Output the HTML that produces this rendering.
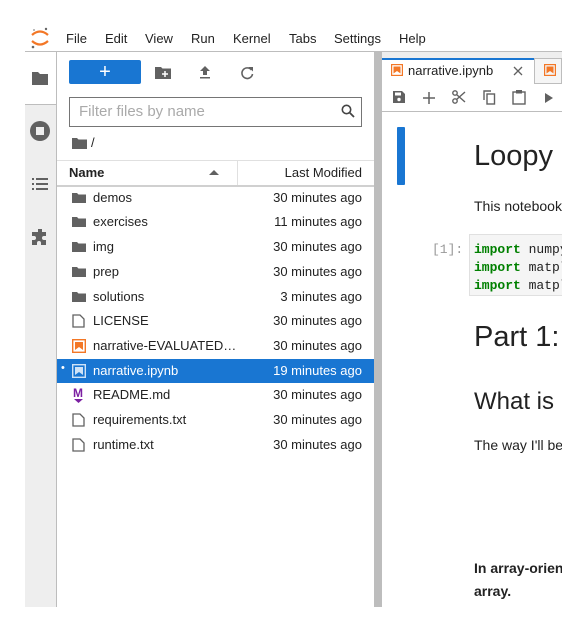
<!DOCTYPE html>
<html><head><style>
body{margin:0;width:587px;height:632px;background:#fff;position:relative;overflow:hidden;font-family:"Liberation Sans",sans-serif;color:#222}
.a{position:absolute}
.menu span{position:absolute;top:31px;font-size:13px;color:#222}
.row{position:absolute;left:57px;width:317px;height:24px;font-size:13px;color:#222}
.row .n{position:absolute;left:36px;top:4px}
.row .t{position:absolute;right:12px;top:4px}
.row .i{position:absolute;left:15px;top:6px}
code{font-family:"Liberation Mono",monospace}
</style></head><body>
<svg class="a" style="left:30px;top:26px" width="20" height="24" viewBox="0 0 20 24"><path d="M2 9 Q10 2 18 9" stroke="#f37726" stroke-width="2.2" fill="none"/><path d="M2 15 Q10 22 18 15" stroke="#f37726" stroke-width="2.2" fill="none"/><circle cx="16" cy="3" r="1.2" fill="#666"/><circle cx="3" cy="21" r="1.3" fill="#666"/><circle cx="4" cy="4" r="0.9" fill="#888"/></svg>
<div class="menu"><span style="left:66px">File</span><span style="left:105px">Edit</span><span style="left:145px">View</span><span style="left:191px">Run</span><span style="left:233px">Kernel</span><span style="left:289px">Tabs</span><span style="left:334px">Settings</span><span style="left:399px">Help</span></div>
<div class="a" style="left:25px;top:51px;width:537px;height:1px;background:#bdbdbd"></div>
<div class="a" style="left:25px;top:104px;width:31px;height:503px;background:#eee"></div>
<div class="a" style="left:56px;top:52px;width:1px;height:555px;background:#bdbdbd"></div>
<div class="a" style="left:25px;top:104px;width:31px;height:1px;background:#bdbdbd"></div>
<svg class="a" style="left:31px;top:70px" width="18" height="16"><path d="M1 2h6l2 2h8v11H1z" fill="#616161"/></svg>
<svg class="a" style="left:30px;top:121px" width="20" height="20"><circle cx="10" cy="10" r="10" fill="#616161"/><rect x="6" y="6" width="8" height="8" fill="#eee"/></svg>
<svg class="a" style="left:31px;top:177px" width="18" height="14" fill="#616161"><rect x="1" y="1" width="2" height="2"/><rect x="5" y="1" width="12" height="2"/><rect x="1" y="6" width="2" height="2"/><rect x="5" y="6" width="12" height="2"/><rect x="1" y="11" width="2" height="2"/><rect x="5" y="11" width="12" height="2"/></svg>
<svg class="a" style="left:31px;top:228px" width="18" height="18"><path d="M7 1h4v3h4v4h-2a2 2 0 0 0 0 4h2v5H10v-2a2 2 0 0 0-4 0v2H1v-5h2a2 2 0 0 0 0-4H1V4h6z" fill="#616161"/></svg>
<div class="a" style="left:69px;top:60px;width:72px;height:24px;background:#1976d2;border-radius:2px;color:#fff;text-align:center;font-size:20px;line-height:24px">+</div>
<svg class="a" style="left:155px;top:66px" width="16" height="13"><path d="M0 1h6l1.5 1.5H16V13H0z" fill="#616161"/><path d="M10 5v6M7 8h6" stroke="#fff" stroke-width="1.5"/></svg>
<svg class="a" style="left:199px;top:66px" width="12" height="13"><path d="M6 0L11 5H8v4H4V5H1z" fill="#616161"/><rect x="1" y="11" width="10" height="1.5" fill="#616161"/></svg>
<svg class="a" style="left:240px;top:66px" width="14" height="14"><path d="M11.5 4A5.3 5.3 0 1 0 12.5 8" stroke="#616161" stroke-width="1.6" fill="none"/><path d="M8.5 1L13 1L13 5.5z" fill="#616161"/></svg>
<div class="a" style="left:69px;top:97px;width:291px;height:28px;border:1px solid #757575;font-size:15px;color:#aaa;line-height:28px;text-indent:9px">Filter files by name</div>
<svg class="a" style="left:341px;top:104px" width="14" height="14"><circle cx="5.5" cy="5.5" r="4.2" stroke="#444" stroke-width="1.6" fill="none"/><path d="M8.5 8.5L13 13" stroke="#444" stroke-width="1.8"/></svg>
<svg class="a" style="left:72px;top:137px" width="15" height="12"><path d="M0 1h5l1.5 1.5H15V12H0z" fill="#616161"/></svg>
<div class="a" style="left:91px;top:135px;font-size:13px">/</div>
<div class="a" style="left:57px;top:160px;width:317px;height:1px;background:#e0e0e0"></div>
<div class="a" style="left:237px;top:161px;width:1px;height:24px;background:#e0e0e0"></div>
<div class="a" style="left:57px;top:185px;width:317px;height:2px;background:#d0d0d0"></div>
<div class="a" style="left:69px;top:165px;font-size:13px;font-weight:bold">Name</div>
<svg class="a" style="left:209px;top:170px" width="10" height="6"><path d="M0 5L5 0L10 5z" fill="#616161"/></svg>
<div class="a" style="right:225px;top:165px;font-size:13px">Last Modified</div>
<div class="row" style="top:186px"><svg class="i" width="14" height="12"><path d="M0 1h5l1.5 1.5H14V11H0z" fill="#616161"/></svg><span class="n">demos</span><span class="t">30 minutes ago</span></div>
<div class="row" style="top:210px"><svg class="i" width="14" height="12"><path d="M0 1h5l1.5 1.5H14V11H0z" fill="#616161"/></svg><span class="n">exercises</span><span class="t">11 minutes ago</span></div>
<div class="row" style="top:235px"><svg class="i" width="14" height="12"><path d="M0 1h5l1.5 1.5H14V11H0z" fill="#616161"/></svg><span class="n">img</span><span class="t">30 minutes ago</span></div>
<div class="row" style="top:260px"><svg class="i" width="14" height="12"><path d="M0 1h5l1.5 1.5H14V11H0z" fill="#616161"/></svg><span class="n">prep</span><span class="t">30 minutes ago</span></div>
<div class="row" style="top:285px"><svg class="i" width="14" height="12"><path d="M0 1h5l1.5 1.5H14V11H0z" fill="#616161"/></svg><span class="n">solutions</span><span class="t">3 minutes ago</span></div>
<div class="row" style="top:309px"><svg class="i" width="13" height="14" style="top:5px"><path d="M1 1h7l4 4v8H1z" stroke="#616161" stroke-width="1.3" fill="none"/></svg><span class="n">LICENSE</span><span class="t">30 minutes ago</span></div>
<div class="row" style="top:334px"><svg class="i" width="14" height="14" style="top:5px"><rect x="0.7" y="0.7" width="12.6" height="12.6" fill="none" stroke="#f37726" stroke-width="1.4"/><path d="M3 3h8v8l-4-3-4 3z" fill="#f37726"/></svg><span class="n">narrative-EVALUATED…</span><span class="t">30 minutes ago</span></div>
<div class="row" style="top:359px;background:#1976d2;color:#fff"><span class="a" style="left:4px;top:3px;font-size:11px">•</span><svg class="i" width="14" height="14" style="top:5px"><rect x="0.7" y="0.7" width="12.6" height="12.6" fill="none" stroke="#cfe3f7" stroke-width="1.4"/><path d="M3 3h8v8l-4-3-4 3z" fill="#cfe3f7"/></svg><span class="n">narrative.ipynb</span><span class="t">19 minutes ago</span></div>
<div class="row" style="top:383px"><span class="a" style="left:16px;top:3px;color:#7b1fa2;font-weight:bold;font-size:12px">M</span><svg class="a" style="left:17px;top:16px" width="10" height="5"><path d="M0 0h9L4.5 4z" fill="#7b1fa2"/></svg><span class="n">README.md</span><span class="t">30 minutes ago</span></div>
<div class="row" style="top:408px"><svg class="i" width="13" height="14" style="top:5px"><path d="M1 1h7l4 4v8H1z" stroke="#616161" stroke-width="1.3" fill="none"/></svg><span class="n">requirements.txt</span><span class="t">30 minutes ago</span></div>
<div class="row" style="top:433px"><svg class="i" width="13" height="14" style="top:5px"><path d="M1 1h7l4 4v8H1z" stroke="#616161" stroke-width="1.3" fill="none"/></svg><span class="n">runtime.txt</span><span class="t">30 minutes ago</span></div>
<div class="a" style="left:374px;top:52px;width:8px;height:555px;background:#bdbdbd"></div>
<div class="a" style="left:382px;top:52px;width:180px;height:32px;background:#eee;border-bottom:1px solid #bdbdbd;box-sizing:border-box"></div>
<div class="a" style="left:382px;top:58px;width:152px;height:26px;background:#fff;border-top:2px solid #1976d2;box-sizing:border-box"></div>
<div class="a" style="left:534px;top:58px;width:28px;height:25px;background:#f5f5f5;border:1px solid #bdbdbd;border-bottom:none;box-sizing:border-box"></div>
<svg class="a" style="left:391px;top:64px" width="12" height="12"><rect x="0.6" y="0.6" width="10.8" height="10.8" fill="none" stroke="#f37726" stroke-width="1.2"/><path d="M2.5 2.5h7v7l-3.5-2.5-3.5 2.5z" fill="#f37726"/></svg>
<div class="a" style="left:408px;top:63px;font-size:13px">narrative.ipynb</div>
<svg class="a" style="left:513px;top:66px" width="10" height="10"><path d="M1 1L9 9M9 1L1 9" stroke="#616161" stroke-width="1.3"/></svg>
<svg class="a" style="left:544px;top:64px" width="12" height="12"><rect x="0.6" y="0.6" width="10.8" height="10.8" fill="none" stroke="#f37726" stroke-width="1.2"/><path d="M2.5 2.5h7v7l-3.5-2.5-3.5 2.5z" fill="#f37726"/></svg>
<div class="a" style="left:382px;top:111px;width:180px;height:1px;background:#bdbdbd"></div>
<svg class="a" style="left:393px;top:91px" width="12" height="12"><path d="M0 0h9l3 3v9H0z" fill="#616161"/><rect x="2" y="1.5" width="6" height="3" fill="#fff"/><circle cx="6" cy="8.5" r="1.7" fill="#fff"/></svg>
<svg class="a" style="left:423px;top:92px" width="12" height="12"><path d="M6 0v12M0 6h12" stroke="#616161" stroke-width="1.5"/></svg>
<svg class="a" style="left:452px;top:90px" width="14" height="14"><circle cx="3" cy="3" r="2.2" stroke="#616161" stroke-width="1.4" fill="none"/><circle cx="3" cy="11" r="2.2" stroke="#616161" stroke-width="1.4" fill="none"/><path d="M4.5 4.5L13 12M4.5 9.5L13 2" stroke="#616161" stroke-width="1.4"/></svg>
<svg class="a" style="left:482px;top:90px" width="14" height="15"><path d="M9 1H2v9" stroke="#616161" stroke-width="1.4" fill="none"/><rect x="5" y="4" width="7.5" height="10" stroke="#616161" stroke-width="1.4" fill="none"/></svg>
<svg class="a" style="left:512px;top:89px" width="14" height="16"><rect x="1" y="3" width="12" height="12" stroke="#616161" stroke-width="1.4" fill="none"/><rect x="4" y="1" width="6" height="3.5" fill="#616161"/></svg>
<svg class="a" style="left:545px;top:93px" width="9" height="10"><path d="M0 0L8 5L0 10z" fill="#616161"/></svg>
<div class="a" style="left:397px;top:127px;width:8px;height:58px;background:#1976d2;border-radius:1px"></div>
<div class="a" style="left:474px;top:140px;font-size:29px;white-space:nowrap">Loopy</div>
<div class="a" style="left:474px;top:198px;font-size:14px;white-space:nowrap">This notebook</div>
<div class="a" style="left:432px;top:241px;font-size:13px;color:#999"><code>[1]:</code></div>
<div class="a" style="left:469px;top:234px;width:93px;height:62px;background:#f5f5f5;border:1px solid #e0e0e0;border-right:none;box-sizing:border-box"></div>
<div class="a" style="left:474px;top:240px;font-size:13px;line-height:17px;white-space:nowrap;overflow:hidden;width:88px"><code><b style="color:#008000">import</b> numpy<br><b style="color:#008000">import</b> matpl<br><b style="color:#008000">import</b> matpl</code></div>
<div class="a" style="left:474px;top:321px;font-size:29px;white-space:nowrap">Part 1:</div>
<div class="a" style="left:474px;top:388px;font-size:24px;white-space:nowrap">What is</div>
<div class="a" style="left:474px;top:437px;font-size:14px;white-space:nowrap">The way I'll be</div>
<div class="a" style="left:474px;top:557px;font-size:14px;font-weight:bold;line-height:23px;white-space:nowrap">In array-orien<br>array.</div>
<div class="a" style="left:562px;top:0;width:25px;height:632px;background:#fff"></div>
<div class="a" style="left:0;top:607px;width:587px;height:25px;background:#fff"></div>
</body></html>
